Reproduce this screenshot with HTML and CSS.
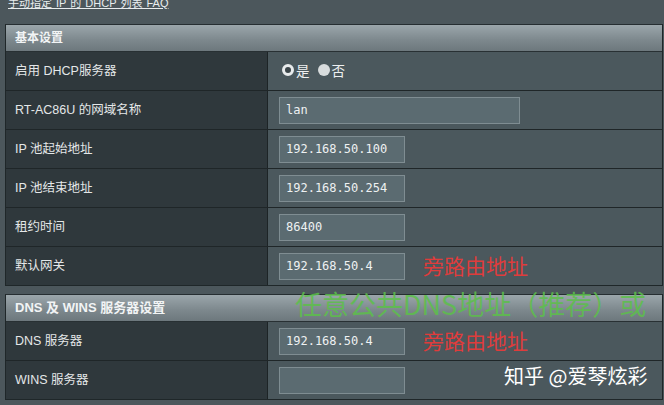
FILE: index.html
```html
<!DOCTYPE html>
<html>
<head>
<meta charset="utf-8">
<link rel="stylesheet" href="styles.css">
</head>
<body>
<div class="top"><a class="faq" href="#">手动指定 IP 的 DHCP 列表 FAQ</a></div>

<div class="section">
  <div class="sect-head">基本设置</div>
  <div class="row">
    <div class="label">启用 DHCP服务器</div>
    <div class="value">
      <span class="radio on"></span><span class="rtext">是</span>
      <span class="radio off"></span><span class="rtext">否</span>
    </div>
  </div>
  <div class="row">
    <div class="label">RT-AC86U 的网域名称</div>
    <div class="value"><div class="input wide">lan</div></div>
  </div>
  <div class="row">
    <div class="label">IP 池起始地址</div>
    <div class="value"><div class="input">192.168.50.100</div></div>
  </div>
  <div class="row">
    <div class="label">IP 池结束地址</div>
    <div class="value"><div class="input">192.168.50.254</div></div>
  </div>
  <div class="row">
    <div class="label">租约时间</div>
    <div class="value"><div class="input">86400</div></div>
  </div>
  <div class="row">
    <div class="label">默认网关</div>
    <div class="value"><div class="input">192.168.50.4</div><span class="note">旁路由地址</span></div>
  </div>
</div>

<div class="section second">
  <div class="sect-head en">DNS 及 WINS 服务器设置</div>
  <div class="row">
    <div class="label">DNS 服务器</div>
    <div class="value"><div class="input">192.168.50.4</div><span class="note">旁路由地址</span></div>
  </div>
  <div class="row">
    <div class="label">WINS 服务器</div>
    <div class="value"><div class="input"></div></div>
  </div>
  <div class="green">任意公共DNS地址（推荐）或</div>
</div>

<div class="watermark">知乎 @爱琴炫彩</div>
</body>
</html>
```

FILE: styles.css
```css
html, body {
  margin: 0;
  padding: 0;
}
body {
  width: 664px;
  height: 405px;
  overflow: hidden;
  background: #4c575c;
  font-family: "Liberation Sans", "Noto Sans CJK SC", sans-serif;
  color: #e6e9ea;
  position: relative;
}
.top {
  height: 24px;
  padding-left: 8px;
  overflow: hidden;
}
.faq {
  display: block;
  margin-top: -4px;
  font-size: 11px;
  line-height: 14px;
  color: #e8ecee;
  text-decoration: underline;
  word-spacing: 1px;
}
.section {
  position: relative;
  margin-left: 5px;
  width: 656px;
  border: 1px solid #1f2729;
  border-top-color: #262e31;
}
.second {
  margin-top: 8px;
}
.sect-head {
  height: 26px;
  line-height: 26px;
  padding-left: 9px;
  font-size: 12px;
  font-weight: bold;
  color: #f2f4f5;
  background: linear-gradient(#9ba6ab, #7c878c 60%, #6d787d);
  border-bottom: 1px solid #283033;
}
.sect-head.en {
  font-size: 13px;
}
.row {
  display: flex;
  height: 38px;
  border-bottom: 1px solid #1f2628;
}
.row:last-child,
.second .row:nth-child(3) {
  border-bottom: none;
}
.label {
  flex: none;
  padding-left: 9px;
  padding-bottom: 3px;
  box-sizing: border-box;
  width: 262px;
  background: #2f383c;
  border-right: 1px solid #1d2426;
  display: flex;
  align-items: center;
  font-size: 12.5px;
  color: #e4e7e8;
}
.value {
  flex: 1;
  background: #4b585d;
  display: flex;
  align-items: center;
  padding-left: 11px;
}
.input {
  width: 118px;
  height: 25px;
  box-sizing: content-box;
  background: #5b6b71;
  border: 1px solid #7f8d92;
  font-family: "DejaVu Sans Mono", monospace;
  font-size: 12px;
  line-height: 25px;
  padding-left: 6px;
  color: #eef1f2;
  flex: none;
}
.input.wide {
  width: 233px;
}
.radio {
  width: 12px;
  height: 12px;
  border-radius: 50%;
  display: inline-block;
  box-sizing: border-box;
  margin-left: 3px;
  margin-right: 2px;
  margin-bottom: 3px;
}
.radio.on {
  background: #3b4549;
  border: 3.5px solid #e8ebec;
}
.radio.off {
  background: #d8dcdd;
  margin-left: 8px;
}
.rtext {
  font-size: 13.5px;
  color: #eef0f1;
  font-family: "Noto Sans CJK SC", sans-serif;
  padding-bottom: 2px;
}
.note {
  margin-left: 18px;
  font-size: 21px;
  line-height: 26px;
  color: #df3c3c;
  font-family: "Noto Sans CJK SC", sans-serif;
  padding-bottom: 2px;
}
.green {
  position: absolute;
  left: 289px;
  top: -9px;
  font-family: "Noto Sans CJK SC", sans-serif;
  font-size: 27px;
  line-height: 36px;
  font-weight: 400;
  color: rgba(92, 192, 74, 0.85);
  white-space: nowrap;
}
.watermark {
  position: absolute;
  left: 504px;
  top: 363px;
  font-family: "Noto Sans CJK SC", sans-serif;
  font-size: 20px;
  line-height: 26px;
  color: #ffffff;
  white-space: nowrap;
}
```
